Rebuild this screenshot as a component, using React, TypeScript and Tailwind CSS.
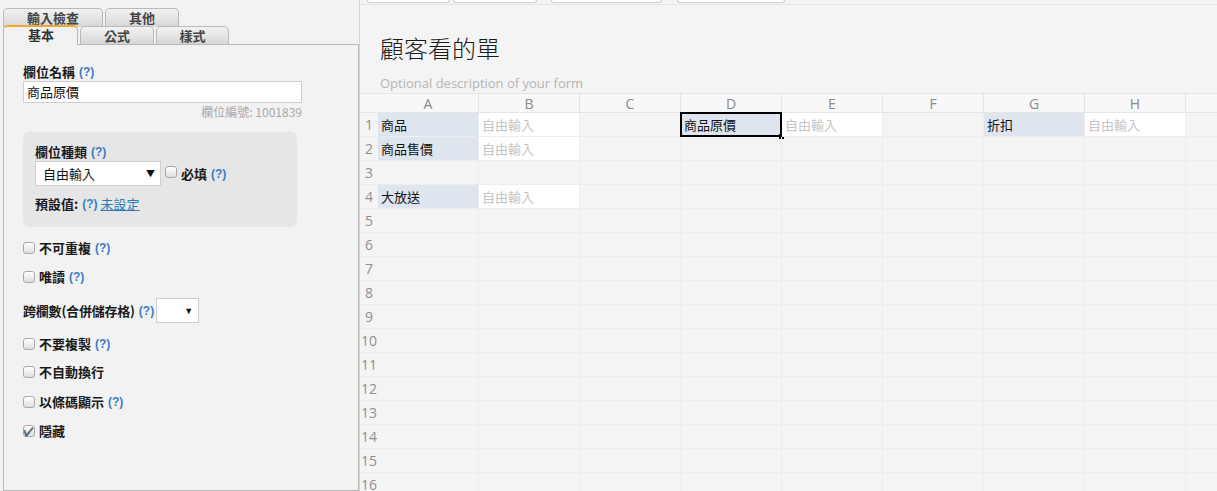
import React from "react";

const cjk = "font-['Noto_Sans_CJK_TC','Noto_Sans_CJK_SC',sans-serif]";
const open = "font-['Open_Sans','Noto_Sans_CJK_TC',sans-serif]";

function Help() {
  return (
    <span className="ml-[4px] font-['Liberation_Sans',sans-serif] text-[12px] font-bold text-[#3b7dc4]">(?)</span>
  );
}

function Check({ checked }: { checked?: boolean }) {
  return (
    <span className="inline-flex h-[12px] w-[12px] shrink-0 items-center justify-center rounded-[3px] border border-[#a9a9a9] bg-linear-to-b from-[#ffffff] to-[#dedede] text-[9px] leading-none text-[#333]">
      {checked ? "✔" : null}
    </span>
  );
}

function CheckRow({ label, help, checked, mt }: { label: string; help?: boolean; checked?: boolean; mt: string }) {
  return (
    <div className={`flex h-[20px] items-center ${mt}`}>
      <Check checked={checked} />
      <span className={`ml-[4px] text-[13px] font-bold text-[#1a1a1a] ${cjk}`}>{label}</span>
      {help ? <Help /> : null}
    </div>
  );
}

function Tab({ label, w, active, bottom }: { label: string; w: string; active?: boolean; bottom?: boolean }) {
  if (active) {
    return (
      <div className={`${w} h-[20px] rounded-t-[5px] border border-b-0 border-[#b9b9b9] border-t-2 border-t-[#f0a830] bg-[#f2f2f2] pl-[24px] text-[13px] font-bold leading-[15px] text-[#333] ${cjk}`}>
        {label}
      </div>
    );
  }
  return (
    <div
      className={`${w} h-[19px] rounded-t-[5px] border border-[#b9b9b9] ${bottom ? "" : "border-b-0"} bg-linear-to-b from-[#f3f3f3] to-[#d6d6d6] text-center text-[13px] font-bold leading-[17px] text-[#444] ${cjk}`}
    >
      {label}
    </div>
  );
}

function LeftPanel() {
  return (
    <div className="flex w-[359px] shrink-0 flex-col pl-[3px] pt-[8px]">
      <div className="flex h-[19px] gap-[2px]">
        <Tab label="輸入檢查" w="w-[100px]" />
        <Tab label="其他" w="w-[74px]" />
      </div>
      <div className="relative z-10 -mb-px -mt-[2px] flex h-[20px] items-end gap-[2px]">
        <Tab label="基本" w="w-[75px]" active />
        <Tab label="公式" w="w-[74px]" bottom />
        <Tab label="樣式" w="w-[73px]" bottom />
        <div className="h-px flex-1 bg-[#b9b9b9]" />
      </div>
      <div className="flex flex-1 flex-col border border-[#b9b9b9] bg-[#f2f2f2] pl-[19px] pt-[19px]">
        <div className="flex h-[16px] items-center">
          <span className={`text-[13px] font-bold text-[#1a1a1a] ${cjk}`}>欄位名稱</span>
          <Help />
        </div>
        <div className={`mt-[1px] flex h-[22px] w-[279px] items-center border border-[#cfcfcf] bg-white pl-[3px] text-[13px] text-[#111] ${cjk}`}>
          商品原價
        </div>
        <div className={`mt-[2px] h-[14px] w-[279px] text-right text-[12px] leading-[14px] text-[#a8a8a8] ${cjk}`}>
          欄位編號: 1001839
        </div>
        <div className="mt-[13px] flex h-[95px] w-[274px] flex-col rounded-[6px] bg-[#e6e6e6] pl-[12px] pt-[12px]">
          <div className="flex h-[16px] items-center">
            <span className={`text-[13px] font-bold text-[#1a1a1a] ${cjk}`}>欄位種類</span>
            <Help />
          </div>
          <div className="mt-[1px] flex h-[25px] items-center">
            <div className={`flex h-[25px] w-[126px] items-center justify-between border border-[#cfcfcf] bg-white pl-[7px] pr-[5px] text-[13px] text-[#111] ${cjk}`}>
              <span>自由輸入</span>
              <span className="text-[9px] text-[#111]">▼</span>
            </div>
            <span className="ml-[4px] -mt-[4px] flex">
              <Check />
            </span>
            <span className={`ml-[4px] text-[13px] font-bold text-[#1a1a1a] ${cjk}`}>必填</span>
            <Help />
          </div>
          <div className="mt-[10px] flex h-[16px] items-center">
            <span className={`text-[13px] font-bold text-[#1a1a1a] ${cjk}`}>預設值:</span>
            <Help />
            <span className={`ml-[3px] text-[13px] text-[#2a7ab5] underline ${cjk}`}>未設定</span>
          </div>
        </div>
        <CheckRow label="不可重複" help mt="mt-[11px]" />
        <CheckRow label="唯讀" help mt="mt-[9px]" />
        <div className="mt-[11px] flex h-[25px] items-center">
          <span className={`text-[13px] font-bold tracking-[-0.2px] text-[#1a1a1a] ${cjk}`}>跨欄數(合併儲存格)</span>
          <Help />
          <div className="ml-[2px] flex h-[25px] w-[43px] items-center justify-end border border-[#cfcfcf] bg-white pr-[5px] text-[9px] text-[#111]">
            ▼
          </div>
        </div>
        <CheckRow label="不要複製" help mt="mt-[11px]" />
        <CheckRow label="不自動換行" mt="mt-[8px]" />
        <CheckRow label="以條碼顯示" help mt="mt-[10px]" />
        <CheckRow label="隱藏" checked mt="mt-[9px]" />
      </div>
    </div>
  );
}

type Cell = { t: string; kind: "label" | "input" } | null;

const cols = ["A", "B", "C", "D", "E", "F", "G", "H"];

const data: Record<number, Cell[]> = {
  1: [
    { t: "商品", kind: "label" },
    { t: "自由輸入", kind: "input" },
    null,
    { t: "商品原價", kind: "label" },
    { t: "自由輸入", kind: "input" },
    null,
    { t: "折扣", kind: "label" },
    { t: "自由輸入", kind: "input" },
  ],
  2: [{ t: "商品售價", kind: "label" }, { t: "自由輸入", kind: "input" }, null, null, null, null, null, null],
  4: [{ t: "大放送", kind: "label" }, { t: "自由輸入", kind: "input" }, null, null, null, null, null, null],
};

function Grid() {
  const rows = Array.from({ length: 16 }, (_, i) => i + 1);
  return (
    <div className="grid grid-cols-[18px_repeat(8,101px)_1fr] grid-rows-[20px_repeat(16,24px)]">
      <div className="border-b border-t border-[#e4e4e4] bg-[#f8f8f8]" />
      {cols.map((c) => (
        <div
          key={c}
          className={`flex items-center justify-center border-b border-r border-t border-[#e4e4e4] bg-[#f8f8f8] text-[14px] text-[#8a8a8a] ${open}`}
        >
          {c}
        </div>
      ))}
      <div className="border-b border-t border-[#e4e4e4] bg-[#f8f8f8]" />
      {rows.map((r) => {
        const rowData = data[r] || [];
        return (
          <React.Fragment key={r}>
            <div className={`flex items-center justify-center border-b border-[#ededed] text-[14px] text-[#8f8f8f] ${open}`}>{r}</div>
            {cols.map((c, ci) => {
              const cell = rowData[ci];
              const selected = r === 1 && c === "D";
              return (
                <div key={c} className="relative border-b border-r border-[#ededed]">
                  {cell ? (
                    <div
                      className={`flex h-full items-center pl-[3px] text-[13px] ${cjk} ${
                        cell.kind === "label" ? "bg-[#dfe5ee] text-[#111]" : "bg-white text-[#c4c4c4]"
                      }`}
                    >
                      {cell.t}
                    </div>
                  ) : null}
                  {selected ? (
                    <>
                      <div className="absolute -inset-[1px] border-2 border-black" />
                      <div className="absolute -bottom-[3px] -right-[3px] h-[5px] w-[5px] bg-black" />
                    </>
                  ) : null}
                </div>
              );
            })}
            <div className="border-b border-[#ededed]" />
          </React.Fragment>
        );
      })}
    </div>
  );
}

function RightPane() {
  return (
    <div className="flex min-w-0 flex-1 flex-col overflow-hidden border-l border-[#d4d4d4] bg-[#f4f4f4]">
      <div className="flex h-[5px] shrink-0 items-start border-b border-[#e6e6e6]">
        <div className="ml-[7px] h-[3px] w-[83px] rounded-b-[3px] border border-t-0 border-[#cfcfcf] bg-white" />
        <div className="ml-[3px] h-[3px] w-[84px] rounded-b-[3px] border border-t-0 border-[#cfcfcf] bg-white" />
        <div className="ml-[14px] h-[3px] w-[111px] rounded-b-[3px] border border-t-0 border-[#cfcfcf] bg-white" />
        <div className="ml-[15px] h-[3px] w-[108px] rounded-b-[3px] border border-t-0 border-[#cfcfcf] bg-white" />
      </div>
      <div className={`ml-[20px] mt-[27px] h-[32px] text-[24px] font-light leading-[32px] text-[#1a1a1a] ${cjk}`}>顧客看的單</div>
      <div className={`ml-[20px] mt-[10px] h-[18px] text-[13px] leading-[18px] text-[#b4b4b4] ${open}`}>
        Optional description of your form
      </div>
      <div className="mt-[1px]">
        <Grid />
      </div>
    </div>
  );
}

export default function App() {
  return (
    <div className="flex h-[491px] w-[1217px] overflow-hidden bg-[#f2f2f2]">
      <LeftPanel />
      <RightPane />
    </div>
  );
}
